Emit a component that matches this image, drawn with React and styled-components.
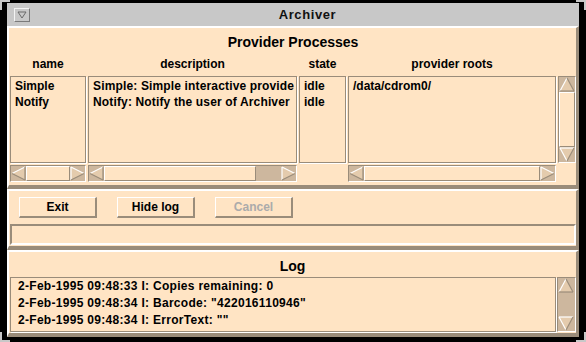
import React from 'react'
import styled, { createGlobalStyle } from 'styled-components'

const BG = '#ffe4c4'
const DARK = '#9a8c7a'
const TROUGH = '#cdb79e'
const ARROW = '#e4cbad'

const GlobalStyle = createGlobalStyle`
  html, body {
    margin: 0;
    padding: 0;
    background: #000;
  }
  body {
    font-family: "Liberation Sans", Arial, sans-serif;
    font-weight: bold;
    font-size: 12px;
    color: #000;
  }
`

const Screen = styled.div`
  position: relative;
  width: 586px;
  height: 342px;
  box-sizing: border-box;
  padding: 3px 7px 5px 7px;
  background: #000;
`

const Corner = styled.span`
  position: absolute;
  width: 8px;
  height: 8px;
  border: 0 solid #c8c8c8;
  ${p => p.$v}: 0;
  ${p => p.$h}: 0;
  border-${p => p.$v}-width: 2px;
  border-${p => p.$h}-width: 2px;
`

const Window = styled.div`
  display: flex;
  flex-direction: column;
  height: 334px;
`

const TitleBar = styled.div`
  height: 23px;
  display: flex;
  align-items: center;
  padding-left: 7px;
  background: #c8c8c8;
`

const MenuButton = styled.div`
  width: 16px;
  height: 14px;
  box-sizing: border-box;
  border: 1px solid;
  border-color: #f4f4f4 #7a7a7a #7a7a7a #f4f4f4;
  display: flex;
  align-items: center;
  justify-content: center;
`

const Title = styled.div`
  flex: 1;
  text-align: center;
  font-size: 13px;
  letter-spacing: 0.6px;
  color: #111;
  padding-left: 6px;
`

const Section = styled.section`
  box-sizing: border-box;
  background: ${BG};
  border-style: solid;
  border-width: 2px 3px 4px 2px;
  border-color: #fff ${DARK} ${DARK} #fff;
  padding: ${p => p.$pad};
`

const Heading = styled.div`
  height: 18px;
  line-height: 18px;
  font-size: 14px;
  text-align: center;
`

const Table = styled.div`
  display: grid;
  grid-template-columns: 76px 209px 47px 208px 18px;
  grid-template-rows: 18px 87px 17px;
  column-gap: 2px;
  row-gap: 2px;
  margin-top: 5px;
`

const ColHead = styled.div`
  line-height: 16px;
  text-align: center;
  white-space: nowrap;
`

const List = styled.div`
  box-sizing: border-box;
  border: 1px solid ${DARK};
  box-shadow: 1px 1px 0 #fff;
  background: ${BG};
  overflow: hidden;
  white-space: nowrap;
  padding: ${p => p.$pad || '1px 0 0 4px'};
  line-height: ${p => p.$line || 16}px;
  letter-spacing: ${p => p.$spacing || 0}px;
`

const Trough = styled.div`
  display: flex;
  flex-direction: ${p => (p.$vertical ? 'column' : 'row')};
  box-sizing: border-box;
  background: ${TROUGH};
  border: 1px solid;
  border-color: ${DARK} #fff #fff ${DARK};
  overflow: hidden;
`

const Slider = styled.div`
  flex: ${p => (p.$size ? `0 0 ${p.$size}px` : '1')};
  box-sizing: border-box;
  background: ${BG};
  border: 1px solid;
  border-color: #fff ${DARK} ${DARK} #fff;
`

const Gap = styled.div`
  flex: 1;
`

const ButtonRow = styled.div`
  display: flex;
  gap: 20px;
  padding-left: 10px;
`

const Button = styled.button`
  width: 78px;
  height: 21px;
  box-sizing: border-box;
  padding: 0;
  border: 2px solid;
  border-width: 1px 2px 2px 1px;
  border-color: #fff ${DARK} ${DARK} #fff;
  background: ${BG};
  font: inherit;
  color: ${p => (p.disabled ? '#ababab' : '#000')};
`

const Entry = styled.div`
  height: 21px;
  box-sizing: border-box;
  margin: 6px 0 0 1px;
  border: 2px solid;
  border-color: ${DARK} #fff #fff ${DARK};
  background: ${BG};
`

const LogArea = styled.div`
  display: grid;
  grid-template-columns: 1fr 19px;
  column-gap: 1px;
  height: 55px;
  margin: 2px 0 0 1px;
`

const arrows = {
  left: { fill: '1,7.5 14,1 14,14', light: [[1, 7.5, 14, 1]], dark: [[14, 1, 14, 14], [1, 7.5, 14, 14]] },
  right: { fill: '14,7.5 1,1 1,14', light: [[1, 1, 14, 7.5], [1, 1, 1, 14]], dark: [[1, 14, 14, 7.5]] },
  up: { fill: '8,1 1,14 15,14', light: [[8, 1, 1, 14]], dark: [[1, 14, 15, 14], [8, 1, 15, 14]] },
  down: { fill: '8,14 1,1 15,1', light: [[1, 1, 15, 1], [1, 1, 8, 14]], dark: [[8, 14, 15, 1]] },
}

function Arrow({ dir }) {
  const a = arrows[dir]
  const vertical = dir === 'up' || dir === 'down'
  const w = vertical ? 16 : 15
  return (
    <svg width={w} height="15" viewBox={`0 0 ${w} 15`} style={{ flex: 'none', display: 'block' }}>
      <polygon points={a.fill} fill={ARROW} />
      {a.light.map((l, i) => (
        <line key={'l' + i} x1={l[0]} y1={l[1]} x2={l[2]} y2={l[3]} stroke="#fff" strokeWidth="1.2" />
      ))}
      {a.dark.map((l, i) => (
        <line key={'d' + i} x1={l[0]} y1={l[1]} x2={l[2]} y2={l[3]} stroke={DARK} strokeWidth="1.2" />
      ))}
    </svg>
  )
}

function ScrollBar({ vertical, size, empty }) {
  return (
    <Trough $vertical={vertical}>
      <Arrow dir={vertical ? 'up' : 'left'} />
      {empty ? <Gap /> : <Slider $size={size} />}
      {size && !empty ? <Gap /> : null}
      <Arrow dir={vertical ? 'down' : 'right'} />
    </Trough>
  )
}

const providers = [
  { name: 'Simple', description: 'Simple: Simple interactive provide', state: 'idle' },
  { name: 'Notify', description: 'Notify: Notify the user of Archiver', state: 'idle' },
]

const logLines = [
  '2-Feb-1995 09:48:33 I: Copies remaining: 0',
  '2-Feb-1995 09:48:34 I: Barcode: "422016110946"',
  '2-Feb-1995 09:48:34 I: ErrorText: ""',
]

export default function App() {
  return (
    <Screen>
      <GlobalStyle />
      <Corner $v="top" $h="left" />
      <Corner $v="top" $h="right" />
      <Corner $v="bottom" $h="left" />
      <Corner $v="bottom" $h="right" />
      <Window>
        <TitleBar>
          <MenuButton>
            <svg width="10" height="8" viewBox="0 0 10 8">
              <polygon points="1,1 9,1 5,7" fill="none" stroke="#6a6a6a" strokeWidth="1" />
            </svg>
          </MenuButton>
          <Title>Archiver</Title>
        </TitleBar>

        <Section $pad="5px 0 3px 1px">
          <Heading>Provider Processes</Heading>
          <Table>
            <ColHead>name</ColHead>
            <ColHead>description</ColHead>
            <ColHead>state</ColHead>
            <ColHead>provider roots</ColHead>
            <div />
            <List>{providers.map(p => <div key={p.name}>{p.name}</div>)}</List>
            <List $spacing={0.15}>{providers.map(p => <div key={p.name}>{p.description}</div>)}</List>
            <List>{providers.map(p => <div key={p.name}>{p.state}</div>)}</List>
            <List><div>/data/cdrom0/</div></List>
            <ScrollBar vertical />
            <ScrollBar />
            <ScrollBar size={152} />
            <div />
            <ScrollBar />
            <div />
          </Table>
        </Section>

        <Section $pad="6px 0 1px 0">
          <ButtonRow>
            <Button>Exit</Button>
            <Button>Hide log</Button>
            <Button disabled>Cancel</Button>
          </ButtonRow>
          <Entry />
        </Section>

        <Section $pad="5px 0 1px 0">
          <Heading>Log</Heading>
          <LogArea>
            <List $pad="0 0 0 7px" $line={17} $spacing={0.3}>
              {logLines.map(l => <div key={l}>{l}</div>)}
            </List>
            <ScrollBar vertical empty />
          </LogArea>
        </Section>
      </Window>
    </Screen>
  )
}
